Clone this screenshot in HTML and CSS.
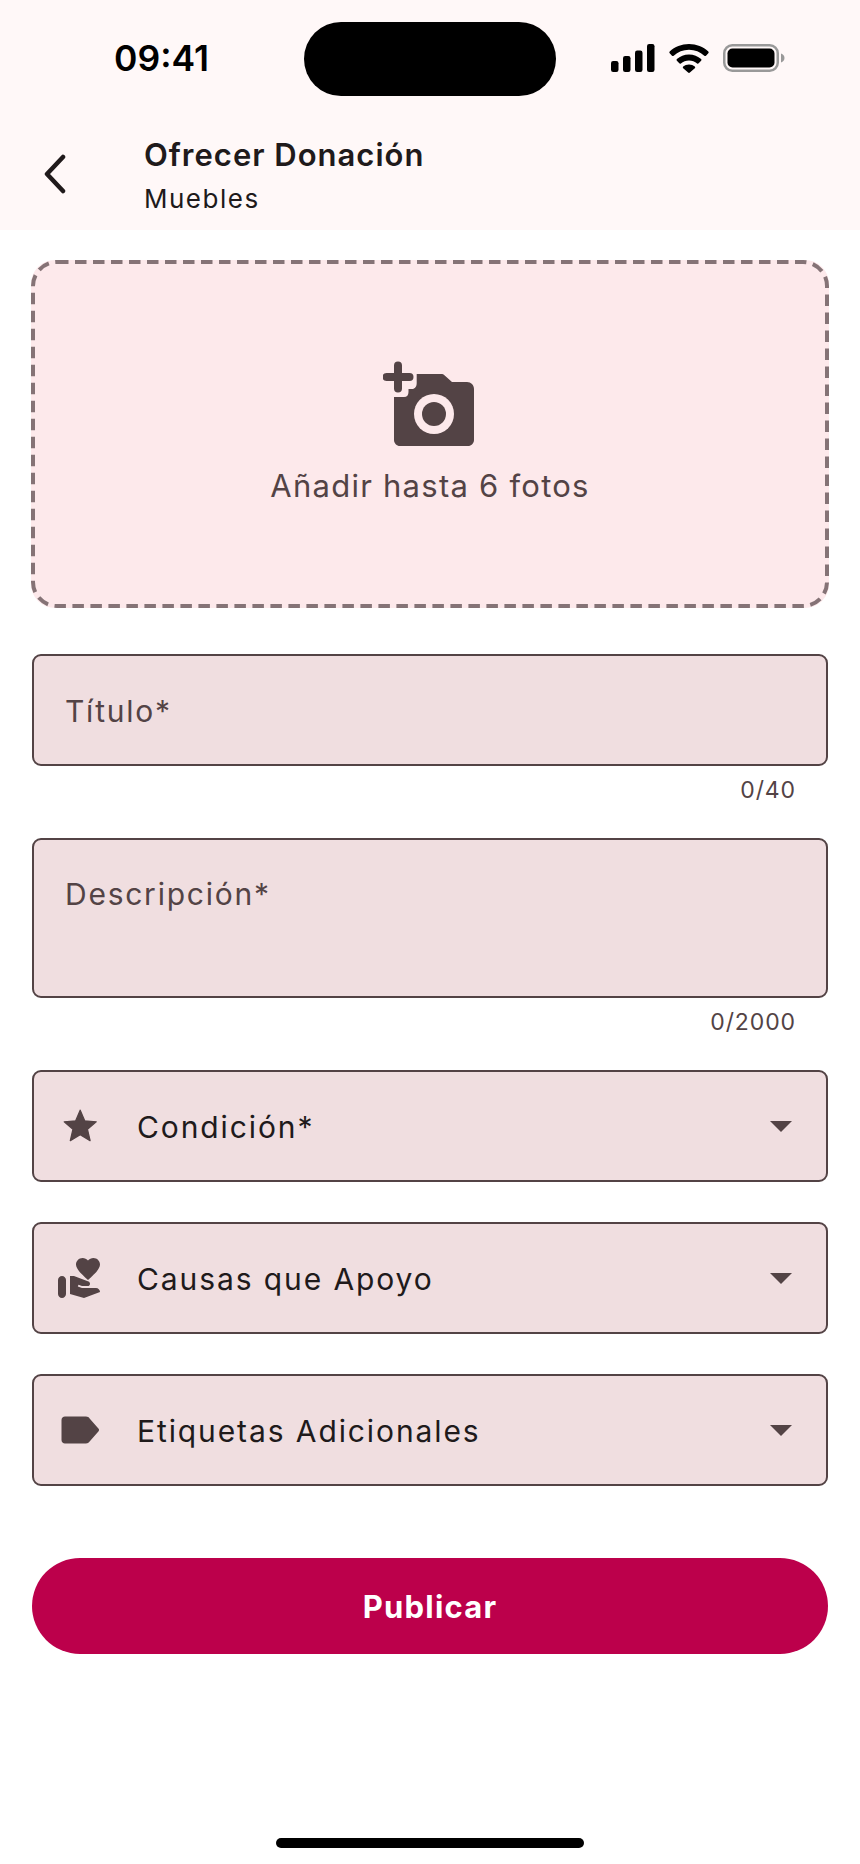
FILE: index.html
```html
<!DOCTYPE html>
<html lang="es">
<head>
<meta charset="utf-8">
<title>Ofrecer Donación</title>
<link rel="stylesheet" href="styles.css">
</head>
<body>
<div class="page">
  <header class="top">
    <div class="status">
      <span class="time">09:41</span>
      <div class="island"></div>
      <div class="status-icons">
        <svg class="ic-signal" width="44" height="28" viewBox="0 0 44 28"><rect x="0" y="17" width="7.5" height="11" rx="2.2"/><rect x="12" y="12" width="7.5" height="16" rx="2.2"/><rect x="24" y="6.500" width="7.500" height="21.500" rx="2.200"/><rect x="36" y="0" width="7.500" height="28" rx="2.200"/></svg>
        <svg class="ic-wifi" width="40" height="29" viewBox="0 0 40 29"><path d="M20 0C12.500 0 5.800 2.800.7 7.500c-.5.5-.5 1.200 0 1.700l2.300 2.500c.5.500 1.200.500 1.700 0C8.800 8 14.100 5.800 20 5.800s11.200 2.200 15.300 5.900c.5.500 1.200.500 1.700 0l2.300-2.500c.5-.5.500-1.200 0-1.700C34.200 2.800 27.500 0 20 0z"/><path d="M20 10.500c-4.700 0-8.900 1.700-12.100 4.600-.5.500-.5 1.200 0 1.700l2.400 2.500c.5.500 1.100.500 1.600.100 2.200-1.800 5-2.900 8.100-2.900s5.900 1.100 8.100 2.900c.5.400 1.100.400 1.600-.1l2.400-2.500c.5-.5.500-1.200 0-1.700-3.200-2.900-7.400-4.600-12.100-4.600z"/><path d="M20 20.500c-2.300 0-4.300.8-5.800 2.100-.5.500-.5 1.100 0 1.600l4.900 4.400c.5.500 1.300.500 1.800 0l4.900-4.400c.5-.5.500-1.100 0-1.600-1.500-1.300-3.500-2.100-5.800-2.100z"/></svg>
        <svg class="ic-batt" width="62" height="28" viewBox="0 0 62 28"><rect x="1.250" y="1.250" width="53.500" height="25.500" rx="8" fill="none" stroke="#999" stroke-width="2.500"/><rect x="4.500" y="4.500" width="47" height="19" rx="5" fill="#000"/><path d="M58 9.500c2.200.6 3.500 2.400 3.500 4.500s-1.300 3.900-3.500 4.500z" fill="#999"/></svg>
      </div>
    </div>
    <div class="bar">
      <svg class="back" width="24" height="40" viewBox="0 0 24 40"><path d="M20 3 4 20l16 17" fill="none" stroke="#201a1b" stroke-width="4.500" stroke-linecap="round" stroke-linejoin="round"/></svg>
      <div class="titles">
        <div class="title">Ofrecer Donación</div>
        <div class="subtitle">Muebles</div>
      </div>
    </div>
  </header>

  <main class="form">
    <div class="drop">
      <svg class="drop-border" viewBox="0 0 798 348" width="798" height="348"><rect x="2" y="2" width="794" height="344" rx="24" fill="none" stroke="#857376" stroke-width="4" stroke-dasharray="11.500 6.500"/></svg>
      <svg class="camera" width="96" height="88" viewBox="0 0 96 88">
        <path class="ink" d="M11 36h10c3 0 4.500-2 4.500-5v-3H29c3 0 4.700-2.500 4.700-6v-9H58c1.500 0 2.700.5 3.700 1.400L69 21h15c4 0 7 3 7 7v51c0 3.300-2.700 6-6 6H17c-3.300 0-6-2.700-6-6z"/>
        <circle cx="51" cy="53" r="20" fill="#fde9eb"/>
        <circle cx="51" cy="53" r="12" class="ink"/>
        <path d="M15 4.500v23M3.500 16h23" fill="none" stroke="#534345" stroke-width="8" stroke-linecap="round"/>
      </svg>
      <div class="drop-text">Añadir hasta 6 fotos</div>
    </div>

    <div class="field single"><span class="label">Título*</span></div>
    <div class="counter">0/40</div>

    <div class="field multi"><span class="label">Descripción*</span></div>
    <div class="counter">0/2000</div>

    <div class="field select first">
      <span class="icon"><svg width="38.400" height="38.400" viewBox="0 0 24 24"><path class="ink round" d="M12 17.270 18.180 21l-1.640-7.030L22 9.240l-7.190-.61L12 2 9.190 8.630 2 9.240l5.460 4.730L5.820 21z"/></svg></span>
      <span class="value">Condición*</span>
      <svg class="arrow" width="22" height="11" viewBox="0 0 22 11"><path class="ink" d="M0 0h22L11 11z"/></svg>
    </div>
    <div class="field select">
      <span class="icon"><svg width="48" height="48" viewBox="0 0 24 24"><path class="ink" d="M3 11c1.100 0 2 .9 2 2v7c0 1.100-.9 2-2 2s-2-.9-2-2v-7c0-1.100.9-2 2-2zm13-7.750C16.650 2.490 17.660 2 18.700 2 20.550 2 22 3.450 22 5.300c0 2.270-2.910 4.900-6 7.700-3.090-2.810-6-5.440-6-7.700C10 3.450 11.450 2 13.300 2c1.040 0 2.050.49 2.700 1.250zM20 17h-7l-2.090-.73.33-.94L13 16h2.820c.65 0 1.180-.53 1.180-1.180 0-.49-.31-.93-.77-1.110L8.970 11H7v9.020L14 22l8.010-3c-.01-1.100-.9-2-2.010-2z"/></svg></span>
      <span class="value">Causas que Apoyo</span>
      <svg class="arrow" width="22" height="11" viewBox="0 0 22 11"><path class="ink" d="M0 0h22L11 11z"/></svg>
    </div>
    <div class="field select">
      <span class="icon tag"><svg width="40" height="28" viewBox="0 0 40 28"><path class="ink" d="M4 .5h21c1.500 0 2.800.7 3.600 1.900l9 10.400c.6.700.6 1.700 0 2.400l-9 10.400c-.8 1.200-2.100 1.900-3.600 1.900H4c-2 0-3.500-1.500-3.500-3.500V4C.5 2 2 .5 4 .5z"/></svg></span>
      <span class="value">Etiquetas Adicionales</span>
      <svg class="arrow" width="22" height="11" viewBox="0 0 22 11"><path class="ink" d="M0 0h22L11 11z"/></svg>
    </div>

    <button class="publish" type="button">Publicar</button>
  </main>
  <div class="home"></div>
</div>
</body>
</html>
```
FILE: styles.css
```css
* { box-sizing: border-box; }
html, body { margin: 0; padding: 0; background: #fff; }
body { font-family: Inter, "Liberation Sans", sans-serif; color: #201a1b; }
.page { width: 860px; height: 1864px; overflow: hidden; display: flex; flex-direction: column; }

.top { height: 230px; background: #fff8f8; flex: none; }
.status { height: 118px; padding: 22px 0 0 114px; display: flex; align-items: flex-start; }
.time { width: 190px; margin-top: 15px; font-size: 35.5px; line-height: 44px; font-weight: 600; color: #000; flex: none; }
.island { width: 252px; height: 74px; border-radius: 37px; background: #000; flex: none; }
.status-icons { margin: 22px 0 0 55px; display: flex; align-items: flex-start; gap: 14px; }
.status-icons svg { display: block; flex: none; }
.ic-signal { fill: #000; }
.ic-wifi { fill: #000; }

.bar { display: flex; align-items: flex-start; padding-left: 43px; }
.back { margin-top: 36px; flex: none; }
.titles { margin-left: 77px; padding-top: 19px; }
.title { font-size: 31px; line-height: 36px; font-weight: 600; letter-spacing: 1px; color: #201a1b; }
.subtitle { margin-top: 10px; font-size: 26px; line-height: 32px; letter-spacing: 1.5px; color: #201a1b; }

.form { padding: 30px 32px 0; display: flex; flex-direction: column; }
.ink { fill: #534345; }
.round { stroke: #534345; stroke-width: .8; stroke-linejoin: round; }

.drop { position: relative; width: 798px; height: 348px; margin-left: -1px; background: #fde9eb; border-radius: 24px; display: flex; flex-direction: column; align-items: center; padding-top: 101px; }
.drop-border { position: absolute; left: 0; top: 0; }
.camera { display: block; margin-left: 2px; }
.drop-text { margin-top: 18px; font-size: 31px; line-height: 38px; letter-spacing: 1.25px; color: #534345; }

.field { width: 796px; background: #f0dee0; border: 2px solid #534345; border-radius: 9px; flex: none; }
.single { height: 112px; margin-top: 46px; padding: 36px 0 0 31px; }
.multi { height: 160px; margin-top: 24px; padding: 35px 0 0 31px; }
.label { display: block; font-size: 30px; line-height: 38px; letter-spacing: 1.75px; color: #534345; }
.counter { height: 48px; padding: 9px 32px 0 0; text-align: right; font-size: 23px; line-height: 30px; letter-spacing: .9px; color: #534345; }

.select { height: 112px; margin-top: 40px; display: flex; align-items: center; padding: 0 34px 0 22px; }
.select.first { margin-top: 24px; }
.icon { width: 48px; height: 48px; flex: none; display: flex; align-items: center; justify-content: center; }
.icon svg { display: block; }
.tag svg { margin-left: 2px; }
.value { margin: 2px 0 0 33px; font-size: 30px; line-height: 38px; letter-spacing: 1.9px; color: #201a1b; }
.arrow { margin-left: auto; flex: none; }

.publish { width: 796px; height: 96px; margin-top: 72px; border: 0; border-radius: 48px; background: #bc004b; color: #fff; font-family: Inter, "Liberation Sans", sans-serif; font-size: 31px; font-weight: 700; letter-spacing: 1.2px; flex: none; }

.home { width: 308px; height: 10px; margin: 184px 0 0 276px; background: #000; border-radius: 5px; flex: none; }
```
